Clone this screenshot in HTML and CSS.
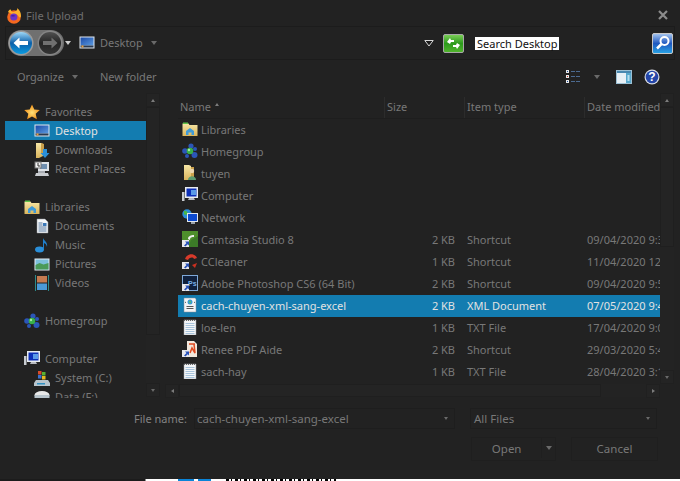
FILE: index.html
```html
<!DOCTYPE html>
<html lang="en">
<head>
<meta charset="utf-8">
<title>File Upload</title>
<link rel="stylesheet" href="styles.css">
</head>
<body>
<svg class="defs" width="0" height="0" aria-hidden="true">
  <defs>
    <linearGradient id="gBlue" x1="0" y1="0" x2="0" y2="1"><stop offset="0" stop-color="#9ed8f8"/><stop offset=".5" stop-color="#0c5fa8"/><stop offset="1" stop-color="#0a9ae0"/></linearGradient>
    <linearGradient id="gGrey" x1="0" y1="0" x2="0" y2="1"><stop offset="0" stop-color="#505050"/><stop offset=".5" stop-color="#252525"/><stop offset="1" stop-color="#343434"/></linearGradient>
    <linearGradient id="gGreen" x1="0" y1="0" x2="0" y2="1"><stop offset="0" stop-color="#7fd05a"/><stop offset=".5" stop-color="#2c9a1c"/><stop offset="1" stop-color="#53b52e"/></linearGradient>
    <linearGradient id="gSearch" x1="0" y1="0" x2="0" y2="1"><stop offset="0" stop-color="#a9c8f0"/><stop offset=".5" stop-color="#1f58c0"/><stop offset="1" stop-color="#27a4e6"/></linearGradient>
    <linearGradient id="gFolder" x1="0" y1="0" x2="0" y2="1"><stop offset="0" stop-color="#f7e7a6"/><stop offset="1" stop-color="#d9b45c"/></linearGradient>
    <linearGradient id="gScreen" x1="0" y1="0" x2="1" y2="1"><stop offset="0" stop-color="#1b4aa8"/><stop offset="1" stop-color="#5c9be0"/></linearGradient>
    <radialGradient id="gStar" cx=".5" cy=".55" r=".55"><stop offset="0" stop-color="#ffe27a"/><stop offset="1" stop-color="#f08a12"/></radialGradient>
    <symbol id="i-desktop" viewBox="0 0 16 16"><rect x=".5" y="1.500" width="15" height="12" fill="#dfe6ee"/><rect x="1.500" y="2.500" width="13" height="8" fill="url(#gScreen)"/><rect x="1.500" y="10.500" width="13" height="2" fill="#2b3a50"/><rect x="2.500" y="10.500" width="2" height="2" fill="#e8a040"/></symbol>
    <symbol id="i-downloads" viewBox="0 0 16 16"><path d="M2 1h5l2 1v12l-4 2H2z" fill="url(#gFolder)"/><path d="M7 1l3 1v10H7z" fill="#c99f4a"/><path d="M9 7h4v4h2.500l-4.500 5-4.500-5H9z" fill="#2a8fd8"/></symbol>
    <symbol id="i-recent" viewBox="0 0 16 16"><rect x="4" y="1" width="11" height="9" fill="#dfe3e8"/><rect x="6" y="3" width="7" height="5" fill="#6f8fb0"/><rect x="1" y="1" width="6" height="6" fill="#f3f3f3" stroke="#777"/><path d="M4 2v3h2" stroke="#333" fill="none"/><path d="M2 12h12l1 3H1z" fill="#c9ccd0"/><rect x="4" y="10" width="7" height="2" fill="#a8acb2"/></symbol>
    <symbol id="i-lib" viewBox="0 0 16 16"><path d="M.5 2.500h6l1 1.500h8v11H.5z" fill="url(#gFolder)"/><rect x="1" y="1.500" width="5" height="1.500" fill="#5ec24a"/><path d="M4 14V10l4-3 4 3v4h-2.500v-2.500h-3V14z" fill="#3f9ad8"/></symbol>
    <symbol id="i-doc" viewBox="0 0 16 16"><path d="M3 1h8l3 3v11H3z" fill="#f4f6f8" stroke="#8c939b" stroke-width=".5"/><path d="M4.500 5h4M4.500 7h4M4.500 9h8M4.500 11h8M4.500 13h8" stroke="#5a7aa0"/><rect x="9" y="5" width="3.500" height="3" fill="#3a78b8"/></symbol>
    <symbol id="i-music" viewBox="0 0 16 16"><ellipse cx="5.500" cy="12.500" rx="4.500" ry="3" fill="#2a8ed8"/><path d="M9 12V1c1 3 5 4 4 9-.5-3-2-3.500-3-4v6z" fill="#1f7fcc"/></symbol>
    <symbol id="i-pic" viewBox="0 0 16 16"><rect x=".5" y="2.500" width="15" height="12" fill="#e8eef4"/><rect x="1.500" y="3.500" width="13" height="10" fill="#7dc0dc"/><path d="M1.500 9l4-2 4 1.500 5-1.500v6.500h-13z" fill="#4a9a58"/></symbol>
    <symbol id="i-video" viewBox="0 0 16 16"><rect x="1" y="0" width="1" height="16" fill="#2d8a8a"/><rect x="14" y="0" width="1" height="16" fill="#2d8a8a"/><rect x="3" y="1" width="10" height="6.500" fill="#c47a50"/><rect x="3" y="8.500" width="10" height="6.500" fill="#4a9ad8"/></symbol>
    <symbol id="i-home" viewBox="0 0 16 16"><circle cx="9" cy="3" r="2.600" fill="#2b56b8"/><circle cx="3" cy="8" r="2.800" fill="#2b56b8"/><circle cx="12.500" cy="12" r="3" fill="#2b56b8"/><circle cx="13" cy="6" r="2" fill="#2b56b8"/><circle cx="8" cy="8" r="3.300" fill="#38b048"/><circle cx="7" cy="7" r="1.200" fill="#a8e8a8"/><circle cx="5" cy="13" r="2" fill="#2b56b8"/></symbol>
    <symbol id="i-comp" viewBox="0 0 16 16"><rect x="0" y="5" width="2.500" height="9" fill="#c8ccd0"/><rect x="3" y="0" width="13" height="11" fill="#e8ecf0"/><rect x="4.500" y="1.500" width="10" height="8" fill="#0c2fb8"/><rect x="9" y="3" width="5" height="5" fill="#5a9ae8"/><path d="M7 11h5l1 2H6z" fill="#b8bcc2"/></symbol>
    <symbol id="i-drive" viewBox="0 0 16 16"><path d="M2 10h12l2 3v3H0v-3z" fill="#b8c4cc"/><rect x="3" y="13" width="8" height="1.500" fill="#3090c0"/><rect x="4" y="1" width="3.500" height="3.500" fill="#d84a2a"/><rect x="8" y="2" width="3.500" height="3.500" fill="#58b030"/><rect x="4" y="5" width="3.500" height="3.500" fill="#3a70d0"/><rect x="8" y="6" width="3.500" height="3.500" fill="#e8b820"/></symbol>
    <symbol id="i-disk" viewBox="0 0 16 16"><ellipse cx="8" cy="6" rx="7.500" ry="4" fill="#e8e8e8"/><rect x=".5" y="6" width="15" height="8" fill="#b8c4cc"/></symbol>
    <symbol id="i-user" viewBox="0 0 16 16"><path d="M2 0h5l2 1v14H2z" fill="url(#gFolder)"/><path d="M9 2h3v12H9z" fill="#c99f4a"/><circle cx="10" cy="6" r="2.200" fill="#ecd6b0"/><path d="M6 15c0-5 8-5 8 0z" fill="#5c9a70"/></symbol>
    <symbol id="i-net" viewBox="0 0 16 16"><circle cx="5" cy="5" r="4.700" fill="#2a8ed8"/><path d="M2 2c2-1 3 1 4 2S3 7 2 5z" fill="#48b848"/><path d="M5 8l2 2-2 1z" fill="#48b848"/><rect x="5" y="4" width="11" height="9" fill="#dfe6ee"/><rect x="6" y="5" width="9" height="7" fill="#0c4ad0"/><path d="M9 13h4v2H9z" fill="#9aa2aa"/></symbol>
    <symbol id="i-arrow" viewBox="0 0 16 16"><rect x="0" y="9" width="7" height="7" fill="#e8e8ec"/><path d="M2 14.500l2.500-2.500-1.500-1.500h4v4l-1.300-1.300-2.300 2.300z" fill="#2650b8"/></symbol>
    <symbol id="i-camt" viewBox="0 0 16 16"><rect width="16" height="16" fill="#3c7a28"/><path d="M0 0h16v5L9 9 6 16H0z" fill="#4e8f2c"/><path d="M6 8c0-3 3-4 6-4v2c-2 0-4 0-4 3z" fill="#f0f0f0"/><use href="#i-arrow"/></symbol>
    <symbol id="i-ccl" viewBox="0 0 16 16"><path d="M3 6c2-6 10-6 12-1l-3 1c-1-2-4-2-6 1z" fill="#d83a2a"/><path d="M10 12l5-2-2 5z" fill="#c83020"/><use href="#i-arrow"/></symbol>
    <symbol id="i-ps" viewBox="0 0 16 16"><rect x=".5" y=".5" width="15" height="15" fill="#10203c" stroke="#7ea8d8"/><text x="6" y="11" class="ps-letters">Ps</text><use href="#i-arrow"/></symbol>
    <symbol id="i-xml" viewBox="0 0 16 16"><path d="M2 1h11l1 1v13H2z" fill="#f2f4f6" stroke="#8a8f96" stroke-width=".5"/><circle cx="8" cy="5" r="2.500" fill="#3a9ad0"/><circle cx="8" cy="5" r="1" fill="#5cc060"/><path d="M4 5l-1 .7M12 5l1 .7M4.500 9.500h7M4.500 11.500h7" stroke="#555"/></symbol>
    <symbol id="i-txt" viewBox="0 0 16 16"><path d="M2 1h12v15H2z" fill="#f4f6f8" stroke="#9a9fa6" stroke-width=".5"/><path d="M2 1.500h12" stroke="#666" stroke-dasharray="1 1"/><path d="M3.500 4.500h9M3.500 6.500h9M3.500 8.500h9M3.500 10.500h9M3.500 12.500h9M3.500 14.500h9" stroke="#a8c4dc"/></symbol>
    <symbol id="i-renee" viewBox="0 0 16 16"><path d="M5 0h7l3 3v13H5z" fill="#f2e8dc"/><path d="M7 3h6M12 3l1 9-3-5-2 5" stroke="#e04a20" stroke-width="1.500" fill="none"/><use href="#i-arrow"/></symbol>
  </defs>
</svg>

<main class="dialog">
  <header class="titlebar">
    <svg class="ff" viewBox="0 0 16 16" width="16" height="16"><circle cx="8" cy="9" r="6.800" fill="#f4681f"/><path d="M2 4c1-2 2-3 3-2 0 2 2 2 3 2 2-1 4-2 3-4 3 2 4 5 4 8 0 1-1 2-2 1-1-3-5-4-7-3z" fill="#fbb02c"/><circle cx="7.800" cy="9" r="3.600" fill="#6a35c8"/><path d="M4.500 8c1-1 4-1 5 0-1 .5-4 .5-5 0z" fill="#3f1d9a"/></svg>
    <span class="title">File Upload</span>
    <svg class="close" viewBox="0 0 10 10" width="10" height="10"><path d="M1 1l8 8M9 1l-8 8" stroke="#8c8c8c" stroke-width="2.200"/></svg>
  </header>

  <section class="navbar">
    <div class="navpill">
      <svg class="navbtn" viewBox="0 0 26 26" width="26" height="26"><circle cx="13" cy="13" r="12.500" fill="#9c9c9c"/><circle cx="13" cy="13" r="11" fill="url(#gBlue)"/><path d="M5.500 13l6-5.500v3.500h8.500v4h-8.500v3.500z" fill="#fff"/></svg>
      <svg class="navbtn" viewBox="0 0 26 26" width="26" height="26"><circle cx="13" cy="13" r="12.500" fill="#858585"/><circle cx="13" cy="13" r="11" fill="url(#gGrey)"/><path d="M20.500 13l-6-5.500v3.500H6v4h8.500v3.500z" fill="#707070"/></svg>
    </div>
    <span class="tri tri-white"></span>
    <div class="crumb">
      <svg class="ico" width="16" height="16"><use href="#i-desktop"/></svg>
      <span class="txt">Desktop</span>
      <span class="tri tri-grey"></span>
    </div>
    <svg class="tri-hollow" viewBox="0 0 10 7" width="10" height="7"><path d="M.8.500h8.400L5 6z" fill="#1c1c1c" stroke="#d8d8d8"/></svg>
    <svg class="refresh" viewBox="0 0 21 19" width="21" height="19"><rect x=".5" y=".5" width="20" height="18" rx="1.500" fill="url(#gGreen)" stroke="#a8a8a8"/><path d="M4 8l3-4 1 2h3v2H8l-1 2zM17 11l-3 4-1-2h-3v-2h3l1-2z" fill="#fff"/></svg>
    <div class="search">
      <span class="search-text">Search Desktop</span>
    </div>
    <svg class="searchbtn" viewBox="0 0 21 21" width="21" height="21"><rect x=".5" y=".5" width="20" height="20" rx="1.500" fill="url(#gSearch)" stroke="#c8c8c8"/><circle cx="12.500" cy="8" r="4" fill="none" stroke="#fff" stroke-width="2"/><path d="M9.500 11l-4.500 4.500" stroke="#fff" stroke-width="2.500"/></svg>
  </section>

  <section class="toolbar">
    <span class="txt tool">Organize</span>
    <span class="tri tri-grey"></span>
    <span class="txt tool newfolder">New folder</span>
    <svg class="views" viewBox="0 0 14 13" width="14" height="13"><rect x="0" y="0" width="3" height="3" fill="#e8e8e8"/><rect x="0" y="5" width="3" height="3" fill="#e8e8e8"/><rect x="0" y="10" width="3" height="3" fill="#e8e8e8"/><rect x="1" y="6" width="1" height="1" fill="#c03020"/><rect x="1" y="1" width="1" height="1" fill="#2050a0"/><rect x="1" y="11" width="1" height="1" fill="#2050a0"/><path d="M5 1.500h4M10 1.500h4M5 6.500h4M10 6.500h4M5 11.500h4M10 11.500h4" stroke="#4c6a90"/></svg>
    <span class="tri tri-grey views-tri"></span>
    <svg class="pane" viewBox="0 0 16 14" width="16" height="14"><rect x=".5" y=".5" width="15" height="13" fill="#e8f0f6" stroke="#9cc0d4"/><rect x="1" y="1" width="14" height="2" fill="#4a88b0"/><rect x="10" y="3" width="5" height="10" fill="#58a8cc"/><rect x="11.500" y="5" width="2" height="6" fill="#b8e0f0"/></svg>
    <svg class="help" viewBox="0 0 16 16" width="16" height="16"><circle cx="8" cy="8" r="7.500" fill="#d8dce4"/><circle cx="8" cy="8" r="6.300" fill="#2546a8"/><text x="8" y="12" text-anchor="middle" class="help-q">?</text></svg>
  </section>

  <section class="panes">
    <nav class="side">
      <div class="side-list">
        <div class="srow head"><svg class="ico" viewBox="0 0 16 16" width="16" height="16"><path d="M8 .5l2.300 5 5.500.6-4.100 3.700 1.200 5.400L8 12.400 3.100 15.200l1.200-5.400L.2 6.100l5.500-.6z" fill="url(#gStar)"/></svg><span class="txt">Favorites</span></div>
        <div class="srow sub sel"><svg class="ico" width="16" height="16"><use href="#i-desktop"/></svg><span>Desktop</span></div>
        <div class="srow sub"><svg class="ico" width="16" height="16"><use href="#i-downloads"/></svg><span class="txt">Downloads</span></div>
        <div class="srow sub"><svg class="ico" width="16" height="16"><use href="#i-recent"/></svg><span class="txt">Recent Places</span></div>
        <div class="srow gap"></div>
        <div class="srow head"><svg class="ico" width="16" height="16"><use href="#i-lib"/></svg><span class="txt">Libraries</span></div>
        <div class="srow sub"><svg class="ico" width="16" height="16"><use href="#i-doc"/></svg><span class="txt">Documents</span></div>
        <div class="srow sub"><svg class="ico" width="16" height="16"><use href="#i-music"/></svg><span class="txt">Music</span></div>
        <div class="srow sub"><svg class="ico" width="16" height="16"><use href="#i-pic"/></svg><span class="txt">Pictures</span></div>
        <div class="srow sub"><svg class="ico" width="16" height="16"><use href="#i-video"/></svg><span class="txt">Videos</span></div>
        <div class="srow gap"></div>
        <div class="srow head"><svg class="ico" width="16" height="16"><use href="#i-home"/></svg><span class="txt">Homegroup</span></div>
        <div class="srow gap"></div>
        <div class="srow head"><svg class="ico" width="16" height="16"><use href="#i-comp"/></svg><span class="txt">Computer</span></div>
        <div class="srow sub"><svg class="ico" width="16" height="16"><use href="#i-drive"/></svg><span class="txt">System (C:)</span></div>
        <div class="srow sub"><svg class="ico" width="16" height="16"><use href="#i-disk"/></svg><span class="txt">Data (F:)</span></div>
      </div>
      <div class="vscroll side-scroll">
        <span class="sbtn"><span class="tri-up"></span></span>
        <span class="vthumb"></span>
        <span class="sbtn end"><span class="tri tri-small"></span></span>
      </div>
    </nav>

    <div class="files">
      <div class="files-top">
        <div class="file-main">
          <div class="colhead">
            <div class="col c-name"><span class="txt">Name</span><span class="tri-up sort"></span></div>
            <div class="col c-size"><span class="txt">Size</span></div>
            <div class="col c-type"><span class="txt">Item type</span></div>
            <div class="col c-date"><span class="txt">Date modified</span></div>
          </div>
          <div class="rows">
            <div class="row"><div class="c-name cell"><svg class="ico" width="16" height="16"><use href="#i-lib"/></svg><span>Libraries</span></div></div>
            <div class="row"><div class="c-name cell"><svg class="ico" width="16" height="16"><use href="#i-home"/></svg><span>Homegroup</span></div></div>
            <div class="row"><div class="c-name cell"><svg class="ico" width="16" height="16"><use href="#i-user"/></svg><span>tuyen</span></div></div>
            <div class="row"><div class="c-name cell"><svg class="ico" width="16" height="16"><use href="#i-comp"/></svg><span>Computer</span></div></div>
            <div class="row"><div class="c-name cell"><svg class="ico" width="16" height="16"><use href="#i-net"/></svg><span>Network</span></div></div>
            <div class="row"><div class="c-name cell"><svg class="ico" width="16" height="16"><use href="#i-camt"/></svg><span>Camtasia Studio 8</span></div><div class="c-size cell r">2 KB</div><div class="c-type cell">Shortcut</div><div class="c-date cell">09/04/2020 9:3</div></div>
            <div class="row"><div class="c-name cell"><svg class="ico" width="16" height="16"><use href="#i-ccl"/></svg><span>CCleaner</span></div><div class="c-size cell r">1 KB</div><div class="c-type cell">Shortcut</div><div class="c-date cell">11/04/2020 12:</div></div>
            <div class="row"><div class="c-name cell"><svg class="ico" width="16" height="16"><use href="#i-ps"/></svg><span>Adobe Photoshop CS6 (64 Bit)</span></div><div class="c-size cell r">2 KB</div><div class="c-type cell">Shortcut</div><div class="c-date cell">09/04/2020 9:5</div></div>
            <div class="row sel"><div class="c-name cell"><svg class="ico" width="16" height="16"><use href="#i-xml"/></svg><span>cach-chuyen-xml-sang-excel</span></div><div class="c-size cell r">2 KB</div><div class="c-type cell">XML Document</div><div class="c-date cell">07/05/2020 9:4</div></div>
            <div class="row"><div class="c-name cell"><svg class="ico" width="16" height="16"><use href="#i-txt"/></svg><span>loe-len</span></div><div class="c-size cell r">1 KB</div><div class="c-type cell">TXT File</div><div class="c-date cell">17/04/2020 9:0</div></div>
            <div class="row"><div class="c-name cell"><svg class="ico" width="16" height="16"><use href="#i-renee"/></svg><span>Renee PDF Aide</span></div><div class="c-size cell r">2 KB</div><div class="c-type cell">Shortcut</div><div class="c-date cell">29/03/2020 5:4</div></div>
            <div class="row"><div class="c-name cell"><svg class="ico" width="16" height="16"><use href="#i-txt"/></svg><span>sach-hay</span></div><div class="c-size cell r">1 KB</div><div class="c-type cell">TXT File</div><div class="c-date cell">28/04/2020 3:1</div></div>
          </div>
        </div>
        <div class="vscroll list-scroll">
          <span class="sbtn"><span class="tri-up"></span></span>
          <span class="vthumb short"></span>
          <span class="sbtn end"><span class="tri tri-small"></span></span>
        </div>
      </div>
      <div class="hscroll">
        <span class="sbtn"><span class="tri-left"></span></span>
        <span class="hthumb"></span>
        <span class="sbtn"><span class="tri-right"></span></span>
      </div>
    </div>
  </section>

  <section class="footer">
    <div class="fline">
      <span class="txt flabel">File name:</span>
      <div class="fbox fname"><span class="txt">cach-chuyen-xml-sang-excel</span><span class="tri tri-small"></span></div>
      <div class="fbox ftype"><span class="txt">All Files</span><span class="tri tri-small"></span></div>
    </div>
    <div class="fbuttons">
      <div class="btn open"><span class="txt open-label">Open</span><span class="open-split"><span class="tri tri-grey"></span></span></div>
      <div class="btn cancel"><span class="txt">Cancel</span></div>
    </div>
  </section>
</main>

<div class="behind">
  <span class="blue b1"></span><span class="blue b2"></span>
  <span class="under"></span>
</div>
</body>
</html>
```

FILE: styles.css
```css
* { box-sizing: border-box; }
html, body { margin: 0; padding: 0; }
body {
  width: 680px;
  height: 481px;
  overflow: hidden;
  background: #fff;
  font-family: "Noto Sans", "Open Sans", sans-serif;
  font-size: 11px;
  color: #787878;
  display: flex;
  flex-direction: column;
}
.defs { position: absolute; }
.ps-letters { font: bold 7px "Liberation Sans", sans-serif; fill: #7ab0e8; }
.help-q { font: bold 12px "Liberation Sans", sans-serif; fill: #fff; }
.txt { color: #787878; }
.ico { flex: none; display: block; }

.dialog {
  width: 680px;
  height: 479px;
  flex: none;
  background: #222;
  display: flex;
  flex-direction: column;
  padding: 0 5px;
}

.titlebar {
  height: 26px;
  display: flex;
  align-items: center;
  padding: 4px 7px 0 1px;
  flex: none;
}
.ff { margin-top: 1px; }
.title { margin-left: 4px; color: #6f6f6f; margin-top: 1px; }
.close { margin-left: auto; }

.navbar {
  height: 34px;
  flex: none;
  display: flex;
  align-items: center;
  border: 1px solid #1c1c1c;
  padding-left: 2px;
}
.navpill {
  display: flex;
  width: 56px;
  height: 26px;
  background: #707070;
  border-radius: 13px;
  overflow: hidden;
}
.navbtn { display: block; flex: none; margin-right: 3px; }
.tri { display: inline-block; width: 0; height: 0; border: 3.500px solid transparent; border-bottom-width: 0; border-top: 4px solid #787878; flex: none; }
.tri-white { border-top-color: #cfcfcf; margin-left: 1px; }
.tri-grey { border-top-color: #6a6a6a; }
.tri-small { border-width: 3px 2.500px 0; border-top-color: #6a6a6a; }
.tri-hollow { margin-left: 255px; flex: none; }
.crumb { display: flex; align-items: center; margin-left: 8px; width: 90px; }
.crumb .txt { margin-left: 5px; margin-top: -1px; }
.crumb .tri { margin-left: 8px; }
.refresh { margin-left: 9px; flex: none; }
.search { margin-left: 11px; flex: 1; }
.search-text {
  display: inline-block;
  background: #fff;
  color: #101010;
  height: 13px;
  line-height: 13px;
  padding: 0 2px;
}
.searchbtn { flex: none; margin-right: 1px; }

.toolbar {
  height: 33px;
  flex: none;
  display: flex;
  align-items: center;
  padding: 0 15px 0 12px;
}
.toolbar .tri { margin-left: 8px; }
.newfolder { margin-left: 22px; }
.views { margin-left: auto; }
.toolbar .views-tri { margin-left: 14px; }
.pane { margin-left: 16px; }
.help { margin-left: 12px; }

.panes {
  flex: none;
  height: 305px;
  display: flex;
}
.side {
  width: 155px;
  flex: none;
  display: flex;
}
.side-list { width: 141px; flex: none; height: 100%; overflow: hidden; padding-top: 9px; }
.srow { height: 19px; display: flex; align-items: center; }
.srow.head { padding-left: 19px; gap: 5px; }
.srow.sub { padding-left: 29px; gap: 5px; }
.srow.sel { background: #137cb0; color: #e2e2e2; }

.vscroll { width: 14px; flex: none; display: flex; flex-direction: column; height: 100%; background: #232323; }
.side-scroll { height: 304px; }
.sbtn { width: 14px; height: 14px; flex: none; display: flex; align-items: center; justify-content: center; background: #242424; border: 1px solid #202020; }
.sbtn.end { margin-top: auto; }
.vthumb { flex: none; height: 228px; background: #242424; border: 1px solid #1f1f1f; }
.vthumb.short { height: 140px; }
.tri-up { display: inline-block; width: 0; height: 0; border: 2.500px solid transparent; border-top-width: 0; border-bottom: 3px solid #7c7c7c; }
.tri-left { display: inline-block; width: 0; height: 0; border: 2.500px solid transparent; border-left-width: 0; border-right: 3px solid #7c7c7c; }
.tri-right { display: inline-block; width: 0; height: 0; border: 2.500px solid transparent; border-right-width: 0; border-left: 3px solid #7c7c7c; }

.files {
  flex: 1;
  display: flex;
  flex-direction: column;
  margin-left: 5px;
  min-width: 0;
}
.files-top { height: 291px; flex: none; display: flex; padding-left: 13px; }
.file-main { width: 482px; flex: none; display: flex; flex-direction: column; overflow: hidden; padding-top: 4px; }
.colhead { display: flex; height: 22px; flex: none; border-bottom: 1px solid #1e1e1e; }
.col { display: flex; align-items: center; padding: 0 0 3px 2px; border-right: 1px solid #2c2c2c; }
.c-name { width: 207px; flex: none; }
.c-size { width: 80px; flex: none; }
.c-type { width: 120px; flex: none; }
.c-date { width: 90px; flex: none; white-space: nowrap; }
.sort { margin-left: 4px; margin-top: -3px; }
.rows { flex: 1; min-height: 0; }
.row { height: 22px; display: flex; align-items: center; padding-bottom: 2px; }
.row.sel { background: #137cb0; color: #e2e2e2; }
.cell { display: flex; align-items: center; white-space: nowrap; }
.cell.c-name { padding-left: 4px; gap: 3px; }
.cell.c-size { padding-right: 10px; justify-content: flex-end; }
.cell.c-type { padding-left: 2px; }
.cell.c-date { padding-left: 2px; }
.hscroll { height: 13px; width: 495px; flex: none; display: flex; background: #232323; }
.hthumb { width: 422px; background: #242424; border: 1px solid #1f1f1f; margin-right: auto; }

.footer { flex: 1; display: flex; flex-direction: column; padding-top: 10px; font-size: 11.5px; }
.fline { display: flex; align-items: center; height: 21px; }
.flabel { margin-left: 129px; width: 55px; flex: none; white-space: nowrap; color: #828282; font-size: 11px; }
.fbox { height: 21px; flex: none; display: flex; align-items: center; justify-content: space-between; border: 1px solid #1e1e1e; padding: 0 6px 0 2px; }
.fname { width: 261px; margin-left: 5px; }
.ftype { width: 187px; margin-left: 15px; padding-left: 3px; }
.fbuttons { display: flex; margin-top: 8px; padding-left: 466px; }
.btn { height: 24px; display: flex; align-items: center; justify-content: center; border: 1px solid #1f1f1f; padding-bottom: 2px; }
.open { width: 85px; }
.open-label { width: 71px; text-align: center; }
.open-split { width: 14px; height: 100%; display: flex; align-items: center; justify-content: center; border-left: 1px solid #1f1f1f; }
.cancel { width: 87px; margin-left: 15px; }

.behind { flex: 1; display: flex; background: linear-gradient(90deg, #1c1c1c 145px, #fff 146px); }
.blue { display: block; height: 2px; background: #0a84d8; flex: none; }
.b1 { width: 16px; margin-left: 178px; }
.b2 { width: 13px; margin-left: 4px; }
.under { width: 110px; height: 2px; margin-left: 15px; background: repeating-linear-gradient(90deg, #000 0 3px, #fff 3px 5px, #000 5px 6px, #fff 6px 9px); }
```
